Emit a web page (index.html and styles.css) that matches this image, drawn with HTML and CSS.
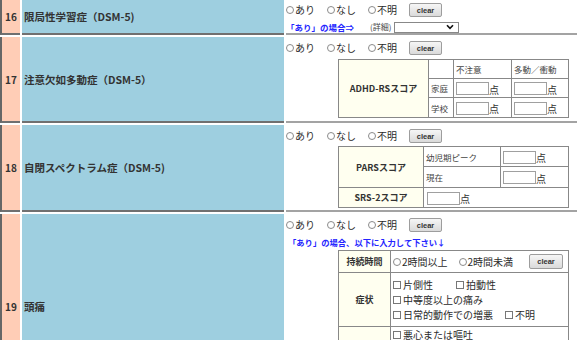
FILE: index.html
```html
<!DOCTYPE html>
<html lang="ja">
<head>
<meta charset="utf-8">
<title>問診票</title>
<link rel="stylesheet" href="styles.css">
</head>
<body>
<div class="sheet">
  <div class="row r16">
    <div class="num">16</div>
    <div class="label">限局性学習症（DSM-5)</div>
    <div class="answer">
      <div class="opts">
        <span class="radio"><i class="rb"></i>あり</span>
        <span class="radio"><i class="rb"></i>なし</span>
        <span class="radio"><i class="rb"></i>不明</span>
        <button class="clear" type="button">clear</button>
      </div>
      <div class="detail">
        <span class="note">「あり」の場合⇒</span>
        <span class="paren">(詳細)</span>
        <span class="select"><span class="sel-val"></span><svg class="chev" width="8" height="6" viewBox="0 0 8 6"><path d="M1 1.2 L4 4.4 L7 1.2" fill="none" stroke="#111" stroke-width="1.6"/></svg></span>
      </div>
    </div>
  </div>

  <div class="row r17">
    <div class="num">17</div>
    <div class="label">注意欠如多動症（DSM-5）</div>
    <div class="answer">
      <div class="opts">
        <span class="radio"><i class="rb"></i>あり</span>
        <span class="radio"><i class="rb"></i>なし</span>
        <span class="radio"><i class="rb"></i>不明</span>
        <button class="clear" type="button">clear</button>
      </div>
      <table class="score adhd">
        <colgroup><col class="c90"><col class="c25"><col class="c58"><col class="c57"></colgroup>
        <tr class="h19">
          <th rowspan="3">ADHD-RSスコア</th>
          <td></td>
          <td class="sub">不注意</td>
          <td class="sub">多動／衝動</td>
        </tr>
        <tr class="h19">
          <td class="sub">家庭</td>
          <td class="fcell"><input class="fld" type="text"><span class="pt">点</span></td>
          <td class="fcell"><input class="fld" type="text"><span class="pt">点</span></td>
        </tr>
        <tr class="h20">
          <td class="sub">学校</td>
          <td class="fcell"><input class="fld" type="text"><span class="pt">点</span></td>
          <td class="fcell"><input class="fld" type="text"><span class="pt">点</span></td>
        </tr>
      </table>
    </div>
  </div>

  <div class="row r18">
    <div class="num">18</div>
    <div class="label">自閉スペクトラム症（DSM-5)</div>
    <div class="answer">
      <div class="opts">
        <span class="radio"><i class="rb"></i>あり</span>
        <span class="radio"><i class="rb"></i>なし</span>
        <span class="radio"><i class="rb"></i>不明</span>
        <button class="clear" type="button">clear</button>
      </div>
      <table class="score pars">
        <colgroup><col class="c85"><col class="c77"><col class="c68"></colgroup>
        <tr class="h20">
          <th rowspan="2">PARSスコア</th>
          <td class="sub">幼児期ピーク</td>
          <td class="fcell"><input class="fld" type="text"><span class="pt">点</span></td>
        </tr>
        <tr class="h21">
          <td class="sub">現在</td>
          <td class="fcell"><input class="fld" type="text"><span class="pt">点</span></td>
        </tr>
        <tr class="h20">
          <th>SRS-2スコア</th>
          <td class="fcell wide" colspan="2"><input class="fld" type="text"><span class="pt">点</span></td>
        </tr>
      </table>
    </div>
  </div>

  <div class="row r19">
    <div class="num">19</div>
    <div class="label">頭痛</div>
    <div class="answer">
      <div class="opts">
        <span class="radio"><i class="rb"></i>あり</span>
        <span class="radio"><i class="rb"></i>なし</span>
        <span class="radio"><i class="rb"></i>不明</span>
        <button class="clear" type="button">clear</button>
      </div>
      <div class="note note-line">「あり」の場合、以下に入力して下さい↓</div>
      <table class="score ha">
        <colgroup><col class="c52"><col class="c178"></colgroup>
        <tr class="h22">
          <th>持続時間</th>
          <td>
            <div class="dur">
              <span class="radio r2"><i class="rb"></i>2時間以上</span>
              <span class="radio"><i class="rb"></i>2時間未満</span>
              <button class="clear clear2" type="button">clear</button>
            </div>
          </td>
        </tr>
        <tr class="h54">
          <th>症状</th>
          <td>
            <div class="checks">
              <div class="cl"><span class="chk wide-gap"><i class="cb"></i>片側性</span><span class="chk"><i class="cb"></i>拍動性</span></div>
              <div class="cl"><span class="chk"><i class="cb"></i>中等度以上の痛み</span></div>
              <div class="cl"><span class="chk"><i class="cb"></i>日常的動作での増悪</span><span class="chk"><i class="cb"></i>不明</span></div>
            </div>
          </td>
        </tr>
        <tr class="h22">
          <th></th>
          <td class="top">
            <div class="checks tight">
              <div class="cl"><span class="chk"><i class="cb"></i>悪心または嘔吐</span></div>
            </div>
          </td>
        </tr>
      </table>
    </div>
  </div>
</div>
</body>
</html>
```

FILE: styles.css
```css
* { box-sizing: border-box; }
html, body { margin: 0; padding: 0; background: #fff; }
body {
  font-family: "Noto Sans CJK JP", "Noto Sans", sans-serif;
  color: #2b2b2b;
  width: 577px;
  height: 340px;
  overflow: hidden;
}
.sheet { display: flex; flex-direction: column; gap: 2px; margin-top: -1px; }
.row { display: grid; grid-template-columns: 20px 262px 1fr; column-gap: 2px; }
.r16 { height: 36px; }
.r17 { height: 86px; }
.r18 { height: 87px; }
.r19 { height: 186px; }

.num {
  background: #ffcdb6;
  border-left: 2px solid #666;
  border-bottom: 2px solid #707070;
  display: flex; align-items: center; justify-content: center;
  font-weight: bold; font-size: 10px; color: #333;
}
.label {
  background: #9ecfe0;
  border-bottom: 2px solid #707070;
  display: flex; align-items: center;
  padding-left: 2px;
  font-weight: bold; font-size: 10.5px; color: #333;
}
.answer {
  border-bottom: 2px solid #a3a3a3;
  padding-top: 4px;
  background: #fff;
}
.opts { display: flex; align-items: center; height: 14px; font-size: 10px; line-height: 14px; }
.radio { display: inline-flex; align-items: center; margin-right: 12px; white-space: nowrap; }
.rb {
  display: inline-block; width: 8px; height: 8px;
  border: 1px solid #8a8a8a; border-radius: 50%;
  margin-right: 1px; background: #fff;
}
.clear {
  width: 33px; height: 14px; margin: 0; padding: 0;
  font-family: "Liberation Sans", Arial, sans-serif; font-size: 7.5px; font-weight: bold; color: #333;
  border: 1px solid #9d9d9d; border-radius: 2px;
  background: linear-gradient(#f6f6f6, #dadada);
}
.detail { display: flex; align-items: center; height: 10px; margin-top: 5px; font-size: 8.5px; line-height: 10px; }
.note { color: #2424ff; font-size: 8.5px; font-weight: bold; white-space: nowrap; }
.paren { margin-left: 16px; color: #444; font-size: 8px; }
.select {
  display: inline-flex; align-items: center; justify-content: flex-end;
  width: 65px; height: 11px; margin-left: 3px;
  border: 1px solid #888; background: #fff; padding-right: 4px;
}
.note-line { margin-top: 4px; height: 12px; line-height: 12px; font-size: 8.3px; padding-left: 2px; }

.score {
  border-collapse: collapse; table-layout: fixed; width: 230px;
  margin-left: 52px; border: 1px solid #555;
}
.adhd { margin-top: 4px; }
.pars { margin-top: 3px; }
.ha { margin-top: 2px; }
.score th, .score td { border: 1px solid #888; padding: 0; vertical-align: middle; }
.score td.top { vertical-align: top; }
.score th { background: #fffff0; font-weight: bold; font-size: 9px; color: #333; text-align: center; }
.c90 { width: 90px; } .c25 { width: 25px; } .c58 { width: 58px; } .c57 { width: 57px; }
.c85 { width: 85px; } .c77 { width: 77px; } .c68 { width: 68px; }
.c52 { width: 52px; } .c178 { width: 178px; }
.h19 { height: 19px; } .h20 { height: 20px; } .h21 { height: 21px; } .h22 { height: 22px; } .h54 { height: 54px; }
.sub { font-size: 8.5px; color: #444; padding-left: 2px !important; white-space: nowrap; }
.fcell { padding-left: 2px !important; white-space: nowrap; font-size: 10px; }
.fcell.wide { padding-left: 3px !important; }
.fld {
  width: 33px; height: 13px; padding: 0; margin: 0;
  border: 1px solid #a0a0a0; background: #fff; vertical-align: middle;
}
.pt { font-size: 10px; vertical-align: middle; color: #333; }

.dur { display: flex; align-items: center; height: 20px; font-size: 10px; padding-left: 2px; }
.dur .r2 { margin-right: 11px; }
.clear2 { margin-left: auto; margin-right: 5px; width: 34px; height: 15px; }
.checks { padding: 1px 0 1px 2px; font-size: 10px; }
.checks.tight { padding-top: 0; }
.cl { display: flex; align-items: center; height: 15px; }
.chk { display: inline-flex; align-items: center; margin-right: 12px; white-space: nowrap; }
.chk.wide-gap { margin-right: 23px; }
.cb { display: inline-block; width: 8px; height: 8px; border: 1px solid #777; background: #fff; margin-right: 2px; }
```
